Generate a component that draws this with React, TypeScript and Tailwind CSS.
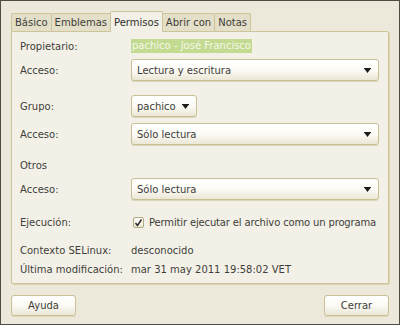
import React from "react";

const Combo: React.FC<{ value: string; wide?: boolean }> = ({ value, wide = true }) => (
  <div
    className={`${wide ? "w-[248px]" : "w-[66px]"} h-[22px] flex items-center justify-between pl-[5px] pr-[7px] rounded-[3px] border border-[#c9c095] bg-gradient-to-b from-[#ffffff] via-[#fcfbf6] to-[#ebe7d6] shadow-[0_1px_0_#dcd6bb]`}
  >
    <span className="whitespace-nowrap">{value}</span>
    <svg width="7" height="6" viewBox="0 0 7 6" className="mt-[1px] shrink-0">
      <path d="M0.5 1 H6.5 L3.5 5 Z" fill="#1c1c1c" />
      <rect x="0" y="0" width="7" height="1" fill="#1c1c1c" />
    </svg>
  </div>
);

const Row: React.FC<{ label: string; h: string; children?: React.ReactNode }> = ({ label, h, children }) => (
  <div className={`flex items-center ${h}`}>
    <span className="w-[111px] shrink-0 whitespace-nowrap">{label}</span>
    {children}
  </div>
);

export default function App() {
  const tabs = ["Básico", "Emblemas", "Permisos", "Abrir con", "Notas"];
  return (
    <div
      className="w-[400px] h-[325px] border border-[#4f4d46] bg-[#ece9da] text-[10px] text-[#3e3e3a] flex flex-col px-[10px]"
      style={{ fontFamily: '"DejaVu Sans", sans-serif' }}
    >
      <div className="flex items-end h-[30px] pt-[9px]">
        {tabs.map((t) =>
          t === "Permisos" ? (
            <div
              key={t}
              className="h-[21px] px-[3px] flex items-center bg-[#f3f1e7] border border-b-0 border-[#cdc49a] rounded-t-[2px] -mb-[1px] -ml-[1px] relative z-10 text-[#2e2e2a] whitespace-nowrap"
            >
              {t}
            </div>
          ) : (
            <div
              key={t}
              className="h-[18px] px-[3px] flex items-center bg-[#e4dfc8] border border-b-0 border-[#cdc49a] rounded-t-[2px] -ml-[1px] first:ml-0 whitespace-nowrap"
            >
              {t}
            </div>
          )
        )}
      </div>
      <div className="h-[253px] border border-[#cdc49a] rounded-b-[2px] rounded-tr-[2px] bg-[#f3f1e7] shadow-[1px_1px_0_#dcd4ae] flex flex-col pl-[8px] pt-[7px]">
        <Row label="Propietario:" h="h-[14px]">
          <span className="bg-[#c3da91] text-[#f4f8e8] px-[1px] leading-[14px] whitespace-nowrap">pachico - José Francisco</span>
        </Row>
        <div className="mt-[6px]">
          <Row label="Acceso:" h="h-[22px]">
            <Combo value="Lectura y escritura" />
          </Row>
        </div>
        <div className="mt-[14px]">
          <Row label="Grupo:" h="h-[22px]">
            <Combo value="pachico" wide={false} />
          </Row>
        </div>
        <div className="mt-[6px]">
          <Row label="Acceso:" h="h-[22px]">
            <Combo value="Sólo lectura" />
          </Row>
        </div>
        <div className="mt-[13px] h-[14px] flex items-center">Otros</div>
        <div className="mt-[6px]">
          <Row label="Acceso:" h="h-[22px]">
            <Combo value="Sólo lectura" />
          </Row>
        </div>
        <div className="mt-[14px]">
          <Row label="Ejecución:" h="h-[16px]">
            <div className="ml-[2px] w-[11px] h-[11px] border border-[#b3a97e] rounded-[2px] bg-gradient-to-b from-white to-[#ece8d8] flex items-center justify-center mr-[5px] shrink-0">
              <svg width="9" height="9" viewBox="0 0 9 9">
                <path d="M1.5 5 L3.5 7.5 L7.5 1.5" stroke="#2b2b2b" strokeWidth="1.5" fill="none" />
              </svg>
            </div>
            <span className="whitespace-nowrap tracking-[-0.15px]">Permitir ejecutar el archivo como un programa</span>
          </Row>
        </div>
        <div className="mt-[13px]">
          <Row label="Contexto SELinux:" h="h-[14px]">
            <span>desconocido</span>
          </Row>
        </div>
        <div className="mt-[5px]">
          <Row label="Última modificación:" h="h-[14px]">
            <span className="whitespace-nowrap">mar 31 may 2011 19:58:02 VET</span>
          </Row>
        </div>
      </div>
      <div className="flex justify-between mt-[11px]">
        {["Ayuda", "Cerrar"].map((b) => (
          <div
            key={b}
            className="w-[65px] h-[21px] flex items-center justify-center rounded-[3px] border border-[#c9c095] bg-gradient-to-b from-[#ffffff] via-[#fbfaf4] to-[#ebe7d6] shadow-[0_1px_0_#dcd6bb]"
          >
            {b}
          </div>
        ))}
      </div>
    </div>
  );
}
